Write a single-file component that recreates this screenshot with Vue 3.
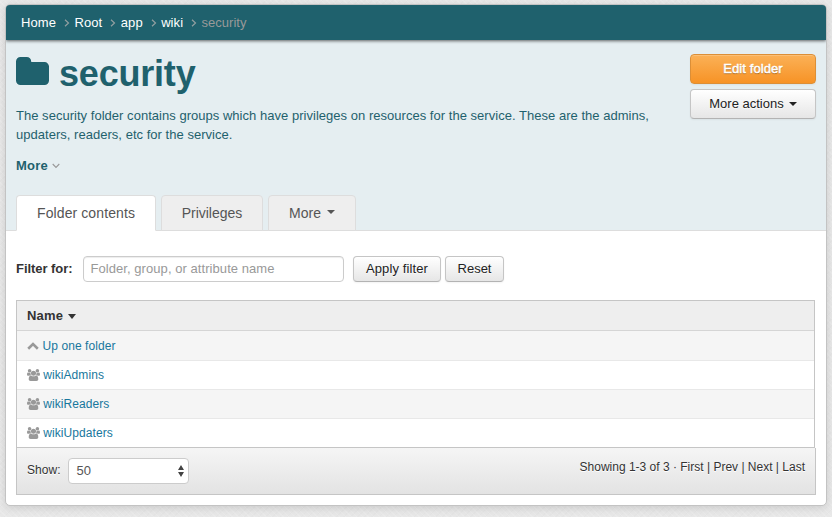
<script setup>
const crumbs = ['Home', 'Root', 'app', 'wiki']
const groups = ['wikiAdmins', 'wikiReaders', 'wikiUpdaters']
</script>

<template>
  <div class="page">
    <main class="card">
      <nav class="crumbs">
        <template v-for="c in crumbs" :key="c">
          <a class="crumb">{{ c }}</a>
          <svg class="angle" width="6" height="8" viewBox="0 0 6 8"><path d="M1 .7 4.5 4 1 7.3" /></svg>
        </template>
        <span class="current">security</span>
      </nav>
      <header class="hero">
        <div class="top">
          <div class="info">
            <h1>
              <svg class="folder" width="33" height="28" viewBox="0 128 1664 1408" preserveAspectRatio="none"><path d="M1664 608v704q0 92-66 158t-158 66h-1216q-92 0-158-66t-66-158v-960q0-92 66-158t158-66h320q92 0 158 66t66 158v32h672q92 0 158 66t66 158z" /></svg>
              <span>security</span>
            </h1>
            <p>The security folder contains groups which have privileges on resources for the service. These are the admins,<br>updaters, readers, etc for the service.</p>
            <a class="more">More <svg width="8" height="6" viewBox="0 0 8 6"><path d="M.7 1 4 4.5 7.3 1" /></svg></a>
          </div>
          <div class="actions">
            <button class="btn primary">Edit folder</button>
            <button class="btn">More actions <i class="caret"></i></button>
          </div>
        </div>
        <div class="tabs">
          <a class="tab active">Folder contents</a>
          <a class="tab privileges">Privileges</a>
          <a class="tab dropdown">More <i class="caret"></i></a>
        </div>
      </header>
      <section class="content">
        <form class="filter" @submit.prevent>
          <label>Filter for:</label>
          <input type="text" placeholder="Folder, group, or attribute name">
          <button class="btn apply">Apply filter</button>
          <button class="btn reset">Reset</button>
        </form>
        <div class="table">
          <div class="row head">Name <i class="caret sort"></i></div>
          <div class="row odd">
            <svg class="up" width="12" height="8" viewBox="0 0 12 8"><path d="M1.2 6.8 6 2.1l4.8 4.7" /></svg>
            <a>Up one folder</a>
          </div>
          <div v-for="(g, i) in groups" :key="g" class="row" :class="{ odd: i % 2 === 1 }">
            <svg class="group" width="13" height="12" viewBox="0 0 1920 1792" preserveAspectRatio="none"><path d="M593 896q-162 5-265 128h-134q-82 0-138-40.5t-56-118.5q0-353 124-353 6 0 43.5 21t97.5 42.5 119 21.5q67 0 133-23-5 37-5 66 0 139 81 256zm1071 637q0 120-73 189.5t-194 69.5h-874q-121 0-194-69.5t-73-189.5q0-53 3.5-103.5t14-109 26.5-108.5 43-97.5 62-81 85.5-53.5 111.5-20q10 0 43 21.5t73 48 107 48 135 21.5 135-21.5 107-48 73-48 43-21.5q61 0 111.5 20t85.5 53.5 62 81 43 97.5 26.5 108.5 14 109 3.5 103.5zm-1024-1277q0 106-75 181t-181 75-181-75-75-181 75-181 181-75 181 75 75 181zm704 384q0 159-112.5 271.5t-271.5 112.5-271.5-112.5-112.5-271.5 112.5-271.5 271.5-112.5 271.5 112.5 112.5 271.5zm576 225q0 78-56 118.5t-138 40.5h-134q-103-123-265-128 81-117 81-256 0-29-5-66 66 23 133 23 59 0 119-21.5t97.5-42.5 43.5-21q124 0 124 353zm-128-609q0 106-75 181t-181 75-181-75-75-181 75-181 181-75 181 75 75 181z" /></svg>
            <a>{{ g }}</a>
          </div>
        </div>
        <footer class="paging">
          <label>Show:</label>
          <div class="select"><span>50</span>
            <svg width="6" height="12" viewBox="0 0 6 12"><path d="M3 0 6 5H0zM3 12 0 7h6z" /></svg>
          </div>
          <span class="summary">Showing 1-3 of 3 · First | Prev | Next | Last</span>
        </footer>
      </section>
    </main>
  </div>
</template>

<style>
body {
  overflow: hidden;
}
</style>

<style scoped>
* {
  box-sizing: border-box;
}
.page {
  height: 517px;
  padding: 4px 5px 11px;
  background:
    repeating-linear-gradient(45deg, rgba(255, 255, 255, .15) 0 1px, transparent 1px 4px),
    repeating-linear-gradient(-45deg, rgba(0, 0, 0, .012) 0 1px, transparent 1px 5px),
    #e8e8e8;
  font: 13px/19px "Liberation Sans", Arial, sans-serif;
  color: #333;
}
.card {
  height: 502px;
  border: 1px solid #c3c3c3;
  border-radius: 5px;
  background: #fff;
  box-shadow: 0 2px 8px rgba(0, 0, 0, .13);
  overflow: hidden;
}
.crumbs {
  position: relative;
  display: flex;
  align-items: center;
  height: 35px;
  padding: 0 15px;
  background: #1f616d;
  box-shadow: 0 1px 3px rgba(0, 0, 0, .6);
  color: #fff;
}
.crumb {
  letter-spacing: .1px;
}
.angle {
  margin: 1px 4.6px 0 7.8px;
  fill: none;
  stroke: #929fa1;
  stroke-width: 1.2;
}
.current {
  color: #999;
}
.hero {
  height: 191px;
  padding: 14px 10px 0;
  display: flex;
  flex-direction: column;
  justify-content: space-between;
  background: #e5eef1;
  border-bottom: 1px solid #ddd;
  color: #1f616d;
}
.top {
  display: flex;
  justify-content: space-between;
}
h1 {
  display: flex;
  gap: 10px;
  height: 40px;
  margin: 0;
  font-size: 36px;
  line-height: 39px;
  letter-spacing: -.2px;
}
.folder {
  margin-top: 3px;
  fill: #1f616d;
}
p {
  margin: 12px 0 0;
  letter-spacing: .028px;
  white-space: nowrap;
}
.more {
  display: flex;
  align-items: center;
  gap: 4px;
  margin-top: 12px;
  letter-spacing: .2px;
  font-weight: bold;
}
.more svg {
  fill: none;
  stroke: #999;
  stroke-width: 1.1;
}
.actions {
  display: flex;
  flex-direction: column;
  gap: 5px;
  width: 126px;
}
.btn {
  display: flex;
  align-items: center;
  justify-content: center;
  gap: 5px;
  height: 30px;
  padding: 0 0 1px;
  border: 1px solid #c5c5c5;
  border-bottom-color: #b3b3b3;
  border-radius: 4px;
  background: linear-gradient(#fff, #e6e6e6);
  box-shadow: inset 0 1px 0 rgba(255, 255, 255, .2), 0 1px 2px rgba(0, 0, 0, .05);
  text-shadow: 0 1px 1px rgba(255, 255, 255, .75);
  font: 13px/19px "Liberation Sans", Arial, sans-serif;
  color: #222;
}
.primary {
  border-color: #dc8f37;
  background: linear-gradient(#fbb157, #f79326);
  color: #fff;
  letter-spacing: .1px;
  -webkit-text-stroke: .5px #fff;
  text-shadow: 0 1px 1px rgba(0, 0, 0, .4);
}
.caret {
  border: 4px solid transparent;
  border-top-color: currentColor;
  border-bottom: 0;
}
.tabs {
  display: flex;
  gap: 5px;
  margin-bottom: -1px;
}
.tab {
  display: flex;
  align-items: center;
  justify-content: center;
  gap: 6px;
  height: 36px;
  border: 1px solid #ddd;
  border-radius: 4px 4px 0 0;
  background: #eee;
  font-size: 14px;
  color: #555;
}
.tab .caret {
  margin-top: -2px;
}
.active {
  width: 140px;
  background: #fff;
  border-bottom-color: #fff;
  letter-spacing: .1px;
}
.privileges {
  width: 102px;
}
.dropdown {
  width: 88px;
}
.content {
  padding: 25px 10px 0;
}
.filter {
  display: flex;
  align-items: center;
}
.filter label {
  width: 67px;
  margin-top: -1px;
  letter-spacing: -.05px;
  font-weight: bold;
}
.filter input {
  width: 261px;
  height: 26px;
  margin-right: 9px;
  padding: 0 7px 1px 6.5px;
  border: 1px solid #ccc;
  border-radius: 4px;
  box-shadow: inset 0 1px 1px rgba(0, 0, 0, .075);
  font: 13px/19px "Liberation Sans", Arial, sans-serif;
  letter-spacing: .06px;
}
.filter input::placeholder {
  color: #999;
}
.apply,
.reset {
  height: 26px;
}
.apply {
  width: 88px;
  margin-right: 4px;
  letter-spacing: .12px;
}
.reset {
  width: 59px;
}
.table {
  width: 799px;
  margin-top: 18px;
  border: 1px solid #c5c5c5;
}
.row {
  display: flex;
  align-items: center;
  height: 29px;
  padding-left: 10px;
  border-top: 1px solid #e8e8e8;
  font-size: 12px;
  letter-spacing: .08px;
  color: #18779d;
}
.head {
  gap: 5px;
  border-top: 0;
  background: #eee;
  font-size: 13px;
  letter-spacing: .15px;
  font-weight: bold;
  color: #333;
}
.head + .row {
  height: 30px;
  padding-top: 1px;
  border-top-color: #d5d5d5;
}
.sort {
  border-width: 5px 4.5px 0;
  margin-top: 2px;
}
.odd {
  background: #f5f5f5;
}
.up {
  margin-right: 3.5px;
  fill: none;
  stroke: #999;
  stroke-width: 2.6;
}
.group {
  margin-right: 3.2px;
  fill: #999;
}
.paging {
  display: flex;
  align-items: flex-start;
  width: 800px;
  height: 47px;
  padding: 10px 10px 0;
  border: 1px solid #c5c5c5;
  border-top: 0;
  background: linear-gradient(#f5f5f5, #e3e3e3);
  font-size: 12px;
  text-shadow: 0 1px 0 #fff;
}
.paging label {
  width: 41px;
  margin-top: 3px;
  letter-spacing: .08px;
}
.select {
  display: flex;
  align-items: center;
  justify-content: space-between;
  width: 121px;
  height: 26px;
  padding: 0 4px 0 7.5px;
  border: 1px solid #ccc;
  border-radius: 4px;
  background: #fff;
  font-size: 13px;
  line-height: 18px;
  color: #555;
}
.select span {
  margin-top: -1px;
}
.select svg {
  fill: #444;
}
.summary {
  margin-left: auto;
}
</style>
